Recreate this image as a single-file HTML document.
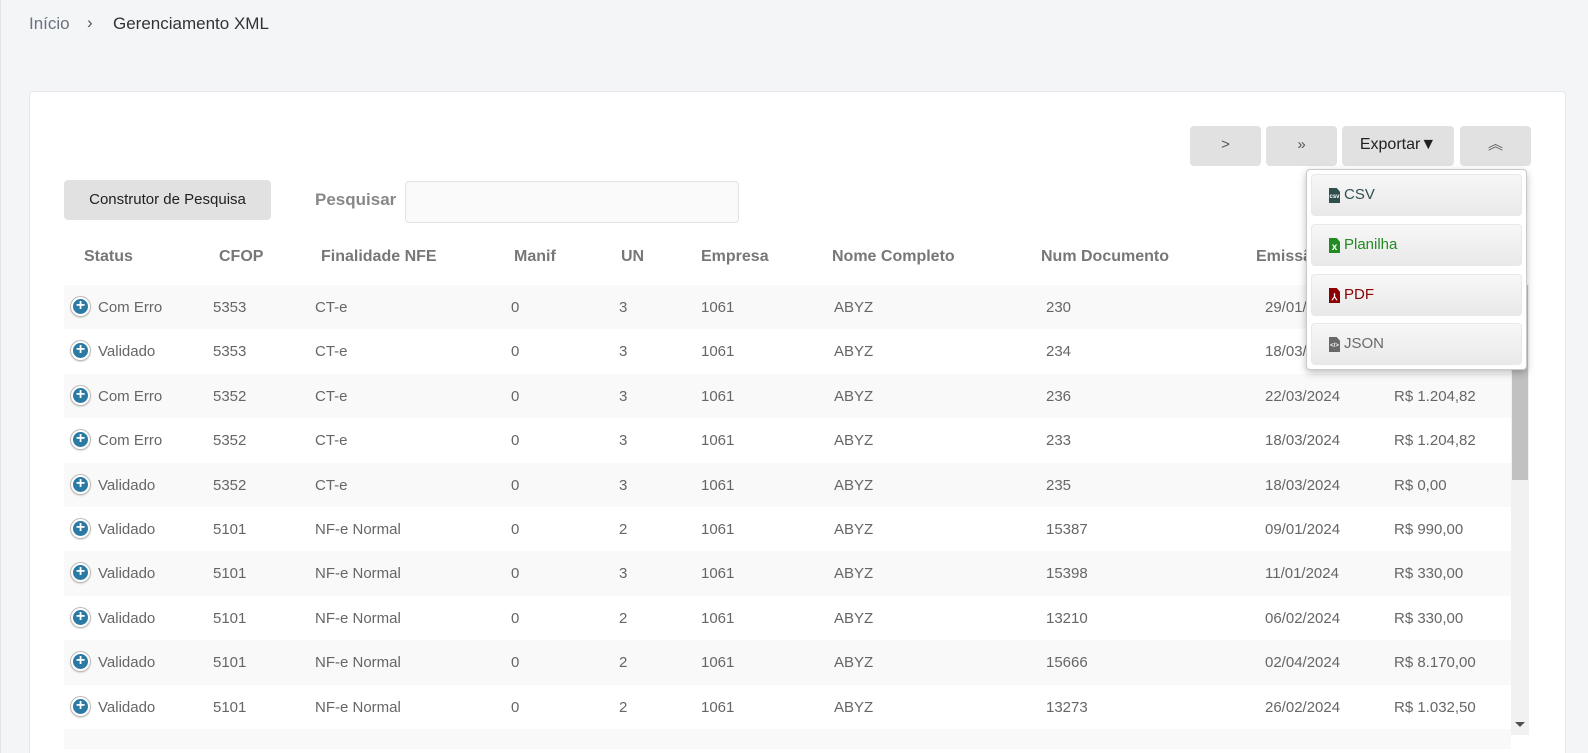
<!DOCTYPE html>
<html style="overflow:hidden;width:1588px;height:753px"><head><meta charset="utf-8"><style>
*{margin:0;padding:0;box-sizing:border-box}
body{width:1588px;height:753px;overflow:hidden;background:#f4f5f7;font-family:"Liberation Sans",sans-serif;position:relative;border-left:1px solid #e3e4e6}
.a{position:absolute;white-space:nowrap}
.card{position:absolute;left:28px;top:91px;width:1537px;height:662px;background:#fff;border:1px solid #e6e7ea;border-bottom:none;border-radius:4px 4px 0 0}
.btn{position:absolute;top:126px;height:40px;background:#e1e1e1;border-radius:4px;color:#555;font-size:15px;text-align:center;line-height:38px}
.th{position:absolute;top:248px;font-size:16px;font-weight:bold;color:#777}
.row{position:absolute;left:63px;width:1447px;height:44.4px;font-size:15px;color:#666}
.row span{position:absolute;top:14px}
.row.s{background:#f9f9f9}
.ic{position:absolute;left:7px;top:12px;width:19px;height:19px;border-radius:50%;background:#2a7aa4;border:2px solid #fff;box-shadow:0 0 0 1px #bbb,0 1px 2px #999;color:#fff;font-size:16px;line-height:14px;text-align:center;font-weight:bold}
.dd{position:absolute;left:1305px;top:169px;width:221px;height:201px;background:#fff;border:1px solid #c9c9c9;border-radius:4px;box-shadow:0 3px 8px rgba(0,0,0,.25)}
.it{position:absolute;left:4px;width:211px;height:42px;border:1px solid #e8e8e8;border-radius:4px;background:linear-gradient(#f7f7f7,#e9e9e9);font-size:15px;line-height:40px;padding-left:17px}
.fi{position:absolute;left:17px;top:13px;width:11px;height:15px;color:#fff;font-size:6px;line-height:18px;text-align:center;font-weight:bold;clip-path:polygon(0 0,70% 0,100% 25%,100% 100%,0 100%)}
.it b{font-weight:normal;margin-left:15px}
</style></head><body>
<div class="a" style="left:28px;top:14px;font-size:17px;color:#6a737d">Início</div>
<div class="a" style="left:86px;top:13px;font-size:17px;color:#555">›</div>
<div class="a" style="left:112px;top:14px;font-size:17px;color:#333">Gerenciamento XML</div>
<div class="card"></div>
<div class="btn" style="left:1189px;width:71px">&gt;</div>
<div class="btn" style="left:1265px;width:71px">»</div>
<div class="btn" style="left:1341px;width:112px;color:#222;font-size:16px">Exportar▼</div>
<div class="btn" style="left:1459px;width:71px">︽</div>
<div class="a" style="left:63px;top:180px;width:207px;height:40px;background:#e1e1e1;border-radius:4px;font-size:15px;color:#222;text-align:center;line-height:40px">Construtor de Pesquisa</div>
<div class="a" style="left:314px;top:190px;font-size:17px;font-weight:bold;color:#888">Pesquisar</div>
<div class="a" style="left:404px;top:181px;width:334px;height:42px;border:1px solid #e2e2e2;border-radius:4px;background:#fafafa"></div>
<div class="th" style="left:83px">Status</div><div class="th" style="left:218px">CFOP</div><div class="th" style="left:320px">Finalidade NFE</div><div class="th" style="left:513px">Manif</div><div class="th" style="left:620px">UN</div><div class="th" style="left:700px">Empresa</div><div class="th" style="left:831px">Nome Completo</div><div class="th" style="left:1040px">Num Documento</div><div class="th" style="left:1255px">Emissão</div>
<div id="rows"></div>
<script>
var d=[["Com Erro","5353","CT-e","3","230","29/01/2024",""],["Validado","5353","CT-e","3","234","18/03/2024",""],["Com Erro","5352","CT-e","3","236","22/03/2024","R$ 1.204,82"],["Com Erro","5352","CT-e","3","233","18/03/2024","R$ 1.204,82"],["Validado","5352","CT-e","3","235","18/03/2024","R$ 0,00"],["Validado","5101","NF-e Normal","2","15387","09/01/2024","R$ 990,00"],["Validado","5101","NF-e Normal","3","15398","11/01/2024","R$ 330,00"],["Validado","5101","NF-e Normal","2","13210","06/02/2024","R$ 330,00"],["Validado","5101","NF-e Normal","2","15666","02/04/2024","R$ 8.170,00"],["Validado","5101","NF-e Normal","2","13273","26/02/2024","R$ 1.032,50"]];
var h="";for(var i=0;i<11;i++){var r=d[i];var t=285+i*44.4;if(!r){h+='<div class="row s" style="top:'+t+'px;height:20px"></div>';continue;}
h+='<div class="row'+(i%2==0?' s':'')+'" style="top:'+t+'px"><div class="ic">+</div><span style="left:34px">'+r[0]+'</span><span style="left:149px">'+r[1]+'</span><span style="left:251px">'+r[2]+'</span><span style="left:447px">0</span><span style="left:555px">'+r[3]+'</span><span style="left:637px">1061</span><span style="left:770px">ABYZ</span><span style="left:982px">'+r[4]+'</span><span style="left:1201px">'+r[5]+'</span><span style="left:1330px">'+r[6]+'</span></div>';}
document.getElementById("rows").innerHTML=h;
</script>
<div class="a" style="left:1510px;top:285px;width:18px;height:450px;background:#f1f1f1"></div>
<div class="a" style="left:1511px;top:285px;width:16px;height:195px;background:#c1c1c1"></div>
<div class="a" style="left:1514px;top:722px;width:0;height:0;border-left:5px solid transparent;border-right:5px solid transparent;border-top:5px solid #505050"></div>
<div class="dd">
<div class="it" style="top:4px;color:#2f4f4f"><span class="fi" style="background:#2f4f4f">csv</span><b>CSV</b></div>
<div class="it" style="top:54px;color:#228b22"><span class="fi" style="background:#228b22;font-size:10px;line-height:19px">x</span><b>Planilha</b></div>
<div class="it" style="top:104px;color:#8b0000"><span class="fi" style="background:#8b0000;font-size:9px">⅄</span><b>PDF</b></div>
<div class="it" style="top:153px;color:#696969"><span class="fi" style="background:#696969">&lt;/&gt;</span><b>JSON</b></div>
</div>
</body></html>
